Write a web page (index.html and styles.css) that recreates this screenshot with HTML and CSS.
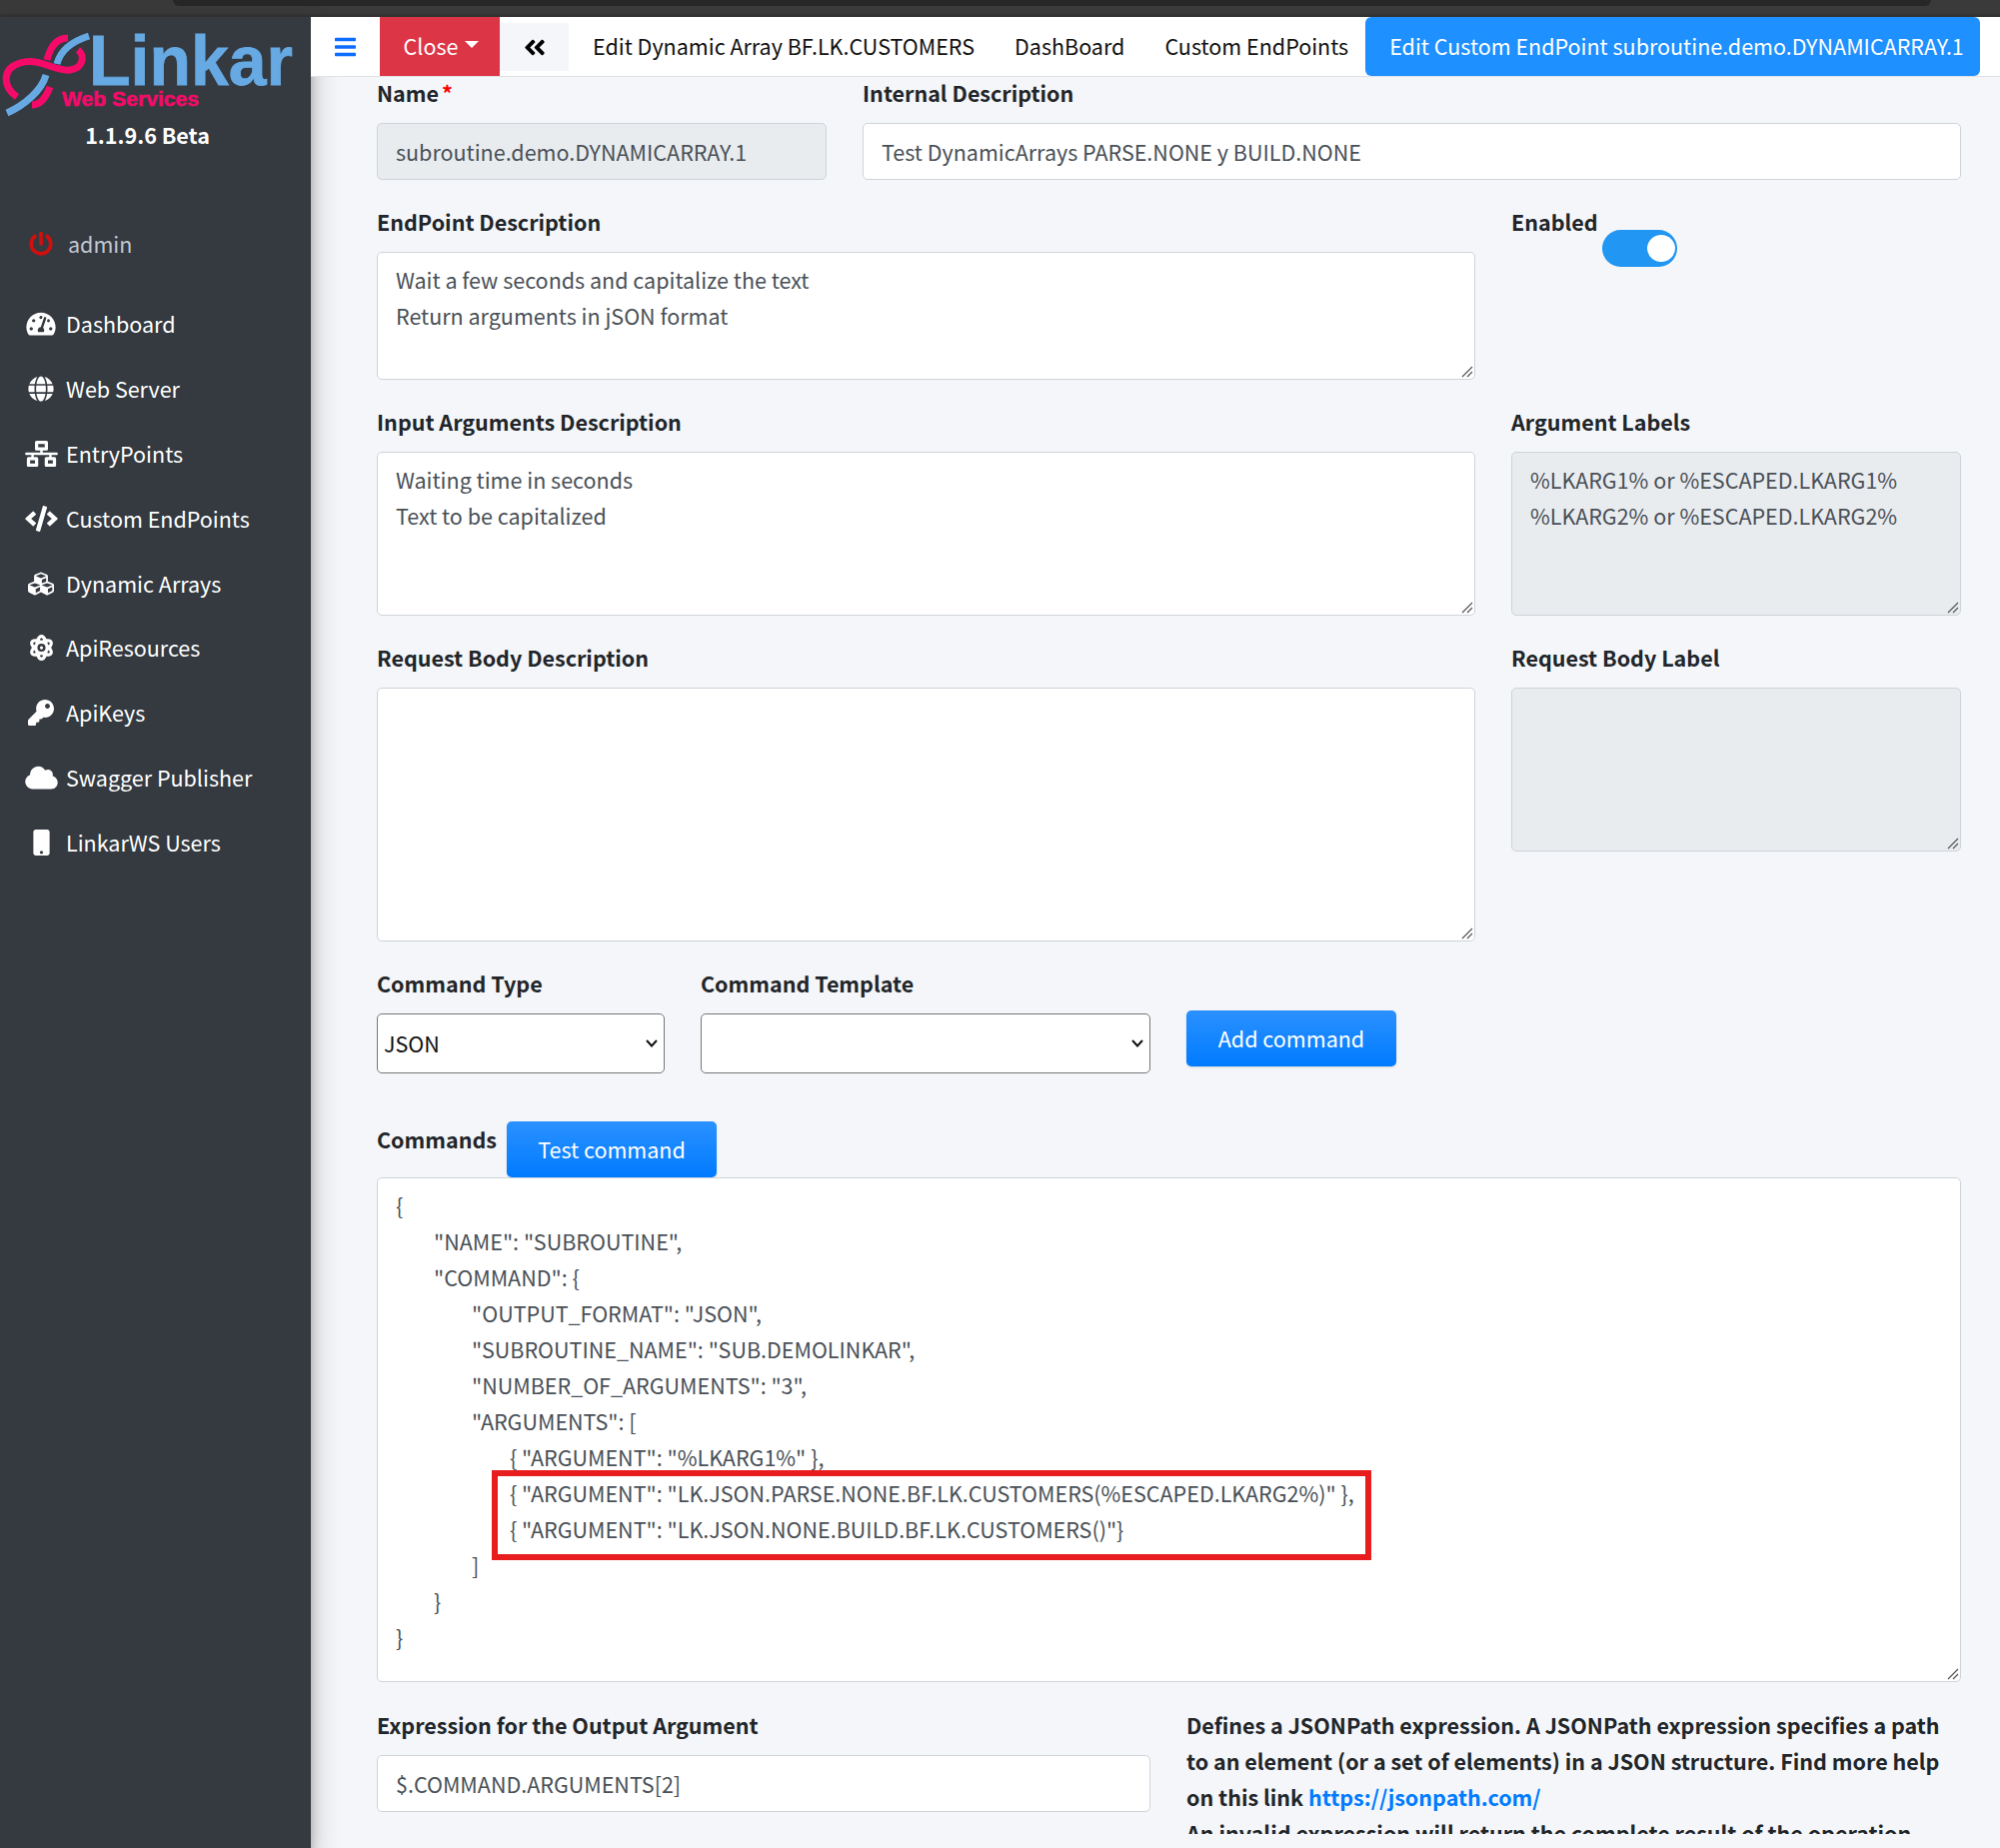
FILE: index.html
```html
<!DOCTYPE html>
<html lang="en">
<head>
<meta charset="utf-8">
<title>Linkar Web Services</title>
<link rel="stylesheet" href="styles.css">
</head>
<body>
<div class="chrome"><div class="chrome-tab"></div></div>
<div class="app">
  <aside class="sidebar">
    <svg class="logo" viewBox="0 0 311 100" width="311" height="100">
      <path class="pink" d="M17 80C3 70 1 52 20 46C40 40 55 55 70 53C84 51 85 38 78 33"/>
      <path class="pink" d="M68 21C56 21 50 31 47 43"/>
      <path class="pink" d="M32 88C42 88 47 78 50 70"/>
      <path class="blue" d="M89 19C70 25 60 35 57 47"/>
      <path class="blue" d="M46 58C42 73 25 88 7 96"/>
      <text class="logo-main" x="89" y="68" textLength="204" lengthAdjust="spacingAndGlyphs">Linkar</text>
      <text class="logo-sub" x="62" y="89" textLength="137" lengthAdjust="spacingAndGlyphs">Web Services</text>
    </svg>
    <div class="version">1.1.9.6 Beta</div>
    <div class="user">
      <span class="ico"><svg class="red" width="24" height="24" viewBox="0 0 512 512"><path d="M400 54.1c63 45 104 118.6 104 201.9 0 136.8-110.8 247.7-247.5 248C120 504.3 8.2 393 8 256.4 7.9 173.1 48.9 99.3 111.8 54.2c11.7-8.3 28-4.8 35 7.7L162.6 90c5.9 10.5 3.1 23.8-6.6 31-41.5 30.8-68 79.6-68 134.9-.1 92.3 74.5 168.1 168 168.1 91.6 0 168.6-74.2 168-169.1-.3-51.8-24.7-101.8-68.1-134-9.7-7.2-12.4-20.5-6.5-30.9l15.8-28.1c7-12.4 23.2-16.1 34.8-7.8zM296 264V24c0-13.3-10.7-24-24-24h-32c-13.3 0-24 10.7-24 24v240c0 13.3 10.7 24 24 24h32c13.3 0 24-10.7 24-24z"/></svg></span>
      <span class="user-name">admin</span>
    </div>
    <nav class="menu">
      <a class="menu-item"><span class="ico"><svg width="30" height="26" viewBox="0 0 576 512"><path d="M288 32C128.94 32 0 160.94 0 320c0 52.8 14.25 102.26 39.06 144.8 5.61 9.62 16.3 15.2 27.44 15.2h443c11.14 0 21.83-5.58 27.44-15.2C561.75 422.26 576 372.8 576 320c0-159.06-128.94-288-288-288zm0 64c14.71 0 26.58 10.13 30.32 23.65-1.11 2.26-2.64 4.23-3.45 6.67l-9.22 27.67c-5.13 3.49-10.97 6.01-17.64 6.01-17.67 0-32-14.33-32-32S270.33 96 288 96zM96 384c-17.67 0-32-14.33-32-32s14.33-32 32-32 32 14.33 32 32-14.33 32-32 32zm48-160c-17.67 0-32-14.33-32-32s14.33-32 32-32 32 14.33 32 32-14.33 32-32 32zm246.77-72.41l-61.33 184C343.13 347.33 352 364.54 352 384c0 11.72-3.38 22.55-8.88 32H232.88c-5.5-9.45-8.88-20.28-8.88-32 0-33.94 26.5-61.43 59.9-63.59l61.34-184.01c4.17-12.56 17.73-19.45 30.36-15.17 12.57 4.19 19.35 17.79 15.17 30.36zm14.66 57.2l15.52-46.55c3.47-1.29 7.13-2.23 11.05-2.23 17.67 0 32 14.33 32 32s-14.33 32-32 32c-11.38-.01-20.89-6.28-26.57-15.22zM480 384c-17.67 0-32-14.33-32-32s14.33-32 32-32 32 14.33 32 32-14.33 32-32 32z"/></svg></span>Dashboard</a>
      <a class="menu-item"><span class="ico"><svg width="26" height="26" viewBox="0 0 496 512"><path d="M336.5 160C322 70.7 287.8 8 248 8s-74 62.7-88.5 152h177zM152 256c0 22.2 1.2 43.5 3.3 64h185.3c2.1-20.5 3.3-41.8 3.3-64s-1.2-43.5-3.3-64H155.3c-2.1 20.5-3.3 41.8-3.3 64zm324.7-96c-28.6-67.9-86.5-120.4-158-141.6 24.4 33.8 41.2 84.7 50 141.6h108zM177.2 18.4C105.8 39.6 47.8 92.1 19.3 160h108c8.7-56.9 25.5-107.8 49.9-141.6zM487.4 192H372.7c2.1 21 3.3 42.5 3.3 64s-1.2 43-3.3 64h114.6c5.5-20.5 8.6-41.8 8.6-64s-3.1-43.5-8.5-64zM120 256c0-21.5 1.2-43 3.3-64H8.6C3.2 212.5 0 233.8 0 256s3.2 43.5 8.6 64h114.6c-2-21-3.2-42.5-3.2-64zm39.5 96c14.5 89.3 48.7 152 88.5 152s74-62.7 88.5-152h-177zm159.3 141.6c71.4-21.2 129.4-73.7 158-141.6h-108c-8.8 56.9-25.6 107.8-50 141.6zM19.3 352c28.6 67.9 86.5 120.4 158 141.6-24.4-33.8-41.2-84.7-50-141.6h-108z"/></svg></span>Web Server</a>
      <a class="menu-item"><span class="ico"><svg width="33" height="26" viewBox="0 0 640 512"><path d="M640 264v-16c0-8.84-7.16-16-16-16H344v-40h72c17.67 0 32-14.33 32-32V32c0-17.67-14.33-32-32-32H224c-17.67 0-32 14.33-32 32v128c0 17.67 14.33 32 32 32h72v40H16c-8.84 0-16 7.16-16 16v16c0 8.84 7.16 16 16 16h104v40H64c-17.67 0-32 14.33-32 32v128c0 17.67 14.33 32 32 32h160c17.67 0 32-14.33 32-32V352c0-17.67-14.33-32-32-32h-56v-40h304v40h-56c-17.67 0-32 14.33-32 32v128c0 17.67 14.33 32 32 32h160c17.67 0 32-14.33 32-32V352c0-17.67-14.33-32-32-32h-56v-40h104c8.84 0 16-7.16 16-16zM256 128V64h128v64H256zm-64 320H96v-64h96v64zm352 0h-96v-64h96v64z"/></svg></span>EntryPoints</a>
      <a class="menu-item"><span class="ico"><svg width="33" height="26" viewBox="0 0 640 512"><path d="M278.9 511.5l-61-17.7c-6.4-1.8-10-8.5-8.2-14.9L346.2 8.7c1.8-6.4 8.5-10 14.9-8.2l61 17.7c6.4 1.8 10 8.5 8.2 14.9L293.8 503.3c-1.9 6.4-8.5 10.1-14.9 8.2zm-114-112.2l43.5-46.4c4.6-4.9 4.3-12.7-.8-17.2L117 256l90.6-79.7c5.1-4.5 5.5-12.3.8-17.2l-43.5-46.4c-4.5-4.8-12.1-5.1-17-.5L3.8 247.2c-5.1 4.7-5.1 12.8 0 17.5l144.1 135.1c4.9 4.6 12.5 4.4 17-.5zm327.2.6l144.1-135.1c5.1-4.7 5.1-12.8 0-17.5L492.1 112.1c-4.8-4.5-12.4-4.3-17 .5L431.6 159c-4.6 4.9-4.3 12.7.8 17.2L523 256l-90.6 79.7c-5.1 4.5-5.5 12.3-.8 17.2l43.5 46.4c4.5 4.9 12.1 5.1 17 .6z"/></svg></span>Custom EndPoints</a>
      <a class="menu-item"><span class="ico"><svg width="26" height="26" viewBox="0 0 512 512"><path d="M488.6 250.2L392 214V105.5c0-15-9.3-28.4-23.4-33.7l-100-37.5c-8.1-3.1-17.1-3.1-25.3 0l-100 37.5c-14.1 5.3-23.4 18.7-23.4 33.7V214l-96.6 36.2C9.3 255.5 0 268.9 0 283.9V394c0 13.6 7.7 26.1 19.9 32.2l100 50c10.1 5.1 22.1 5.1 32.2 0l103.9-52 103.9 52c10.1 5.1 22.1 5.1 32.2 0l100-50c12.2-6.1 19.9-18.6 19.9-32.2V283.9c0-15-9.3-28.4-23.4-33.7zM358 214.8l-85 31.9v-68.2l85-37v73.3zM154 104.1l102-38.2 102 38.2v.6l-102 41.4-102-41.4v-.6zm84 291.1l-85 42.5v-79.1l85-38.8v75.4zm0-112l-102 41.4-102-41.4v-.6l102-38.2 102 38.2v.6zm240 112l-85 42.5v-79.1l85-38.8v75.4zm0-112l-102 41.4-102-41.4v-.6l102-38.2 102 38.2v.6z"/></svg></span>Dynamic Arrays</a>
      <a class="menu-item"><span class="ico"><svg width="23" height="26" viewBox="0 0 448 512"><path d="M223.99908,224a32,32,0,1,0,32.00782,32A32.06431,32.06431,0,0,0,223.99908,224Zm214.172-96c-10.877-19.5-40.50979-50.75-116.27544-41.875C300.39168,34.875,267.63386,0,223.99908,0s-76.39066,34.875-97.89653,86.125C50.3369,77.375,20.706,108.5,9.82907,128-6.54984,157.375-5.17484,201.125,35.702,256-5.17484,310.875-6.54984,354.625,9.82907,384c29.13087,52.375,101.64652,43.625,116.27348,41.875C147.60842,477.125,180.36429,512,223.99908,512s76.3926-34.875,97.89652-86.125c14.62891,1.75,87.14456,10.5,116.27544-41.875C454.55,354.625,453.175,310.875,412.29608,256,453.175,201.125,454.55,157.375,438.171,128ZM63.33313,352c-4-7.25-.125-24.75,15.00195-48.25,6.87695,6.5,14.12891,12.875,21.88087,19.125,1.625,13.75,4,27.125,6.75,40.125C82.34,363.875,67.33313,359.25,63.33313,352Zm36.88282-162.875c-7.75196,6.25-15.00392,12.625-21.88087,19.125-15.12891-23.5-19.00195-41-15.00195-48.25,3.377-6.125,15.97558-11.5,37.92775-11.5,1.75,0,3.875.375,5.75.375C104.09,162.25,101.84,175.625,100.216,189.125ZM223.99908,64c9.50195,0,22.25586,13.5,33.88282,37.25-11.252,3.75-22.50391,8-33.88282,12.875-11.377-4.875-22.62892-9.125-33.88283-12.875C201.74316,77.5,214.49712,64,223.99908,64Zm0,384c-9.502,0-22.25392-13.5-33.88283-37.25,11.25391-3.75,22.50587-8,33.88283-12.875C235.378,402.75,246.62994,407,257.8819,410.75,246.25494,434.5,233.501,448,223.99908,448Zm0-112a80,80,0,1,1,80-80A80.00023,80.00023,0,0,1,223.99908,336ZM384.6593,352c-4,7.25-19.00392,11.875-43.63089,11,2.75-13,5.125-26.375,6.75-40.125,7.75391-6.25,15.00392-12.625,21.87892-19.125C384.7843,327.25,388.6593,344.75,384.6593,352ZM369.65538,208.25c-6.875-6.5-14.125-12.875-21.87892-19.125-1.625-13.5-3.875-26.875-6.75-40.25,1.875,0,4.00195-.375,5.75-.375,21.95413,0,34.67683,4.375,37.88085,11.5C388.6593,167.25,384.7843,184.75,369.65538,208.25Z"/></svg></span>ApiResources</a>
      <a class="menu-item"><span class="ico"><svg width="26" height="26" viewBox="0 0 512 512"><path d="M512 176.001C512 273.203 433.202 352 336 352c-11.22 0-22.19-1.062-32.827-3.069l-24.012 27.014A23.999 23.999 0 0 1 261.223 384H224v40c0 13.255-10.745 24-24 24h-40v40c0 13.255-10.745 24-24 24H24c-13.255 0-24-10.745-24-24v-78.059c0-6.365 2.529-12.47 7.029-16.971l161.802-161.802C163.108 213.814 160 195.271 160 176 160 78.798 238.797.001 335.999 0 433.488-.001 512 78.511 512 176.001zM336 128c0 26.51 21.49 48 48 48s48-21.49 48-48-21.49-48-48-48-48 21.49-48 48z"/></svg></span>ApiKeys</a>
      <a class="menu-item"><span class="ico"><svg width="33" height="26" viewBox="0 0 640 512"><path d="M537.6 226.6c4.1-10.7 6.4-22.4 6.4-34.6 0-53-43-96-96-96-19.7 0-38.1 6-53.3 16.2C367 64.2 315.3 32 256 32c-88.4 0-160 71.6-160 160 0 2.7.1 5.4.2 8.1C40.2 219.8 0 273.2 0 336c0 79.5 64.5 144 144 144h368c70.7 0 128-57.3 128-128 0-61.9-44-113.6-102.4-125.4z"/></svg></span>Swagger Publisher</a>
      <a class="menu-item"><span class="ico"><svg width="17" height="26" viewBox="0 0 320 512"><path d="M272 0H48C21.5 0 0 21.5 0 48v416c0 26.5 21.5 48 48 48h224c26.5 0 48-21.5 48-48V48c0-26.5-21.5-48-48-48zM160 480c-17.7 0-32-14.3-32-32s14.3-32 32-32 32 14.3 32 32-14.3 32-32 32z"/></svg></span>LinkarWS Users</a>
    </nav>
  </aside>
  <div class="main">
    <header class="topbar">
      <a class="burger"><svg width="21" height="24" viewBox="0 0 448 512" preserveAspectRatio="none"><path d="M16 132h416c8.837 0 16-7.163 16-16V76c0-8.837-7.163-16-16-16H16C7.163 60 0 67.163 0 76v40c0 8.837 7.163 16 16 16zm0 160h416c8.837 0 16-7.163 16-16v-40c0-8.837-7.163-16-16-16H16c-8.837 0-16 7.163-16 16v40c0 8.837 7.163 16 16 16zm0 160h416c8.837 0 16-7.163 16-16v-40c0-8.837-7.163-16-16-16H16c-8.837 0-16 7.163-16 16v40c0 8.837 7.163 16 16 16z"/></svg></a>
      <a class="close-btn">Close<span class="caret"></span></a>
      <a class="back-btn"><svg width="22" height="25" viewBox="0 0 448 512"><path d="M223.7 239l136-136c9.4-9.4 24.6-9.4 33.9 0l22.6 22.6c9.4 9.4 9.4 24.6 0 33.9L319.9 256l96.4 96.4c9.4 9.4 9.4 24.6 0 33.9L393.7 409c-9.4 9.4-24.6 9.4-33.9 0l-136-136c-9.5-9.4-9.5-24.6-.1-34zm-192 34l136 136c9.4 9.4 24.6 9.4 33.9 0l22.6-22.6c9.4-9.4 9.4-24.6 0-33.9L127.9 256l96.4-96.4c9.4-9.4 9.4-24.6 0-33.9L201.7 103c-9.4-9.4-24.6-9.4-33.9 0l-136 136c-9.5 9.4-9.5 24.6-.1 34z"/></svg></a>
      <a class="tab tab-first">Edit Dynamic Array BF.LK.CUSTOMERS</a>
      <a class="tab">DashBoard</a>
      <a class="tab">Custom EndPoints</a>
      <a class="tab tab-active">Edit Custom EndPoint subroutine.demo.DYNAMICARRAY.1</a>
    </header>
    <main class="content">
      <div class="row row-30-70 row-first">
        <div class="field"><label class="lbl">Name<span class="req">*</span></label><input class="ctl ctl-off" readonly value="subroutine.demo.DYNAMICARRAY.1"></div>
        <div class="field"><label class="lbl">Internal Description</label><input class="ctl" readonly value="Test DynamicArrays PARSE.NONE y BUILD.NONE"></div>
      </div>
      <div class="row row-70-30">
        <div class="field"><label class="lbl">EndPoint Description</label><textarea class="ctl area h128" readonly>Wait a few seconds and capitalize the text
Return arguments in jSON format</textarea></div>
        <div class="enabled"><label class="lbl">Enabled</label><span class="toggle"><span class="knob"></span></span></div>
      </div>
      <div class="row row-70-30">
        <div class="field"><label class="lbl">Input Arguments Description</label><textarea class="ctl area h164" readonly>Waiting time in seconds
Text to be capitalized</textarea></div>
        <div class="field"><label class="lbl">Argument Labels</label><textarea class="ctl ctl-off area h164" readonly>%LKARG1% or %ESCAPED.LKARG1%
%LKARG2% or %ESCAPED.LKARG2%</textarea></div>
      </div>
      <div class="row row-70-30">
        <div class="field"><label class="lbl">Request Body Description</label><textarea class="ctl area h254" readonly></textarea></div>
        <div class="field"><label class="lbl">Request Body Label</label><textarea class="ctl ctl-off area h164" readonly></textarea></div>
      </div>
      <div class="row row-cmd">
        <div class="field"><label class="lbl">Command Type</label><select class="sel"><option>JSON</option></select></div>
        <div class="field"><label class="lbl">Command Template</label><select class="sel"><option></option></select></div>
        <div class="add-wrap"><button class="btn">Add command</button></div>
      </div>
      <div class="cmd-head"><label class="lbl">Commands</label><button class="btn">Test command</button></div>
      <div class="cmd-body">
<textarea class="ctl area h505" readonly>{
	"NAME": "SUBROUTINE",
	"COMMAND": {
		"OUTPUT_FORMAT": "JSON",
		"SUBROUTINE_NAME": "SUB.DEMOLINKAR",
		"NUMBER_OF_ARGUMENTS": "3",
		"ARGUMENTS": [
			{ "ARGUMENT": "%LKARG1%" },
			{ "ARGUMENT": "LK.JSON.PARSE.NONE.BF.LK.CUSTOMERS(%ESCAPED.LKARG2%)" },
			{ "ARGUMENT": "LK.JSON.NONE.BUILD.BF.LK.CUSTOMERS()"}
		]
	}
}</textarea>
        <div class="mark"></div>
      </div>
      <div class="row row-half">
        <div class="field"><label class="lbl">Expression for the Output Argument</label><input class="ctl" readonly value="$.COMMAND.ARGUMENTS[2]"></div>
        <div class="help">Defines a JSONPath expression. A JSONPath expression specifies a path to an element (or a set of elements) in a JSON structure. Find more help on this link <a class="link">https://jsonpath.com/</a><br>An invalid expression will return the complete result of the operation</div>
      </div>
    </main>
  </div>
</div>
</body>
</html>
```
FILE: styles.css
```css
* { box-sizing: border-box; }
html, body { margin: 0; height: 1849px; overflow: hidden; }
body {
  background: #f4f6f9;
  color: #212529;
  font-family: "Noto Sans CJK SC", "Noto Sans", sans-serif;
  font-size: 21.5px;
  line-height: 36px;
}
.chrome { height: 17px; background: #3a3a3a; border-bottom: 3px solid #333; }
.chrome-tab { margin-left: 173px; width: 1759px; height: 6px; background: #272727; border-radius: 0 0 10px 10px; }
.app { display: flex; height: 1832px; }

.sidebar {
  width: 311px; flex: none; background: #343a40; color: #fff;
  position: relative; z-index: 2;
  box-shadow: 0 14px 28px rgba(0,0,0,.25), 0 10px 10px rgba(0,0,0,.22);
}
.logo { display: block; }
.pink { fill: none; stroke: #f50a6a; stroke-width: 7; }
.blue { fill: none; stroke: #66a9e3; stroke-width: 7; }
.logo-main { font-family: "Liberation Sans", sans-serif; font-weight: 700; font-size: 71px; fill: #66a9e3; stroke: #66a9e3; stroke-width: .8px; }
.logo-sub { font-family: "Liberation Sans", sans-serif; font-weight: 700; font-size: 20px; fill: #f50a6a; stroke: #f50a6a; stroke-width: .5px; }
.version { text-align: center; font-weight: 700; padding-right: 16px; }
.user { display: flex; align-items: center; margin-top: 73px; height: 36px; }
.user-name { color: #c2c7d0; margin-left: 2px; }
.menu { margin-top: 30px; }
.menu-item { display: flex; align-items: center; height: 64.8px; color: #fff; }
.ico { display: flex; justify-content: center; align-items: center; width: 49px; padding-right: 1px; margin-left: 17px; flex: none; }
.ico svg { fill: #fff; }
.ico svg.red { fill: #d00f0f; }

.main { flex: 1; min-width: 0; display: flex; flex-direction: column; }
.topbar {
  position: relative; z-index: 3;
  height: 60px; flex: none; background: #fff; border-bottom: 1px solid #dee2e6;
  display: flex; align-items: stretch;
}
.burger { width: 69px; flex: none; display: flex; align-items: center; justify-content: center; }
.burger svg { fill: #0d6efd; }
.close-btn { width: 120px; flex: none; background: #dc3545; color: #fff; display: flex; align-items: center; justify-content: center; padding: 0 0 1px 3px; }
.caret { margin-left: 7px; border-top: 7px solid #fff; border-left: 7px solid transparent; border-right: 7px solid transparent; margin-top: -4px; }
.back-btn { width: 69px; flex: none; height: 48px; margin-top: 6px; background: #f4f6f9; display: flex; align-items: center; justify-content: center; }
.back-btn svg { fill: #000; }
.tab { display: flex; flex: none; align-items: center; padding: 0 20px 1px; color: #111; white-space: nowrap; }
.tab-first { margin-left: 4px; }
.tab-active { background: #1e90ff; color: #fff; border-radius: 6px; padding: 0 16px 1px 24px; margin-left: -3px; }

.content { height: 1758px; overflow: hidden; padding: 0 39px 0 66px; }
.row { display: grid; column-gap: 36px; margin-top: 24px; }
.row-first { margin-top: -2px; }
.row-30-70 { grid-template-columns: 450px 1fr; }
.row-70-30 { grid-template-columns: 1fr 450px; }
.row-cmd { grid-template-columns: 288px 450px 210px; }
.row-half { grid-template-columns: 774px 1fr; margin-top: 25px; }
.lbl { display: block; font-weight: 700; }
.req { color: #f00; margin-left: 3px; }
.field .lbl { margin-bottom: 12px; }
.ctl {
  display: block; width: 100%; height: 57px; padding: 0 18px;
  font: inherit; color: #495057; background-color: #fff;
  border: 1px solid #ced4da; border-radius: 5px; outline: 0;
}
.ctl-off { background-color: #e9ecef; }
.area {
  padding: 9px 18px; line-height: 36px; overflow: hidden; tab-size: 38px; resize: none; white-space: pre-wrap;
  background-image: url("data:image/svg+xml,%3Csvg xmlns='http://www.w3.org/2000/svg' width='12' height='12'%3E%3Cpath d='M1 11L11 1M6 11L11 6' stroke='%23555' stroke-width='1.2' fill='none'/%3E%3C/svg%3E");
  background-repeat: no-repeat;
  background-position: right 1px bottom 1px;
}
.h128 { height: 128px; }
.h164 { height: 164px; }
.h254 { height: 254px; }
.h505 { height: 505px; }
.enabled { display: flex; align-items: flex-start; }
.toggle { width: 75px; height: 37px; margin: 26px 0 0 4px; background: #2196f3; border-radius: 19px; display: flex; justify-content: flex-end; align-items: center; padding-right: 2px; }
.knob { width: 28px; height: 27px; background: #fff; border-radius: 50%; }
.sel {
  display: block; width: 100%; height: 60px; padding: 0 6px;
  font: inherit; color: #111; background-color: #fff;
  border: 1px solid #767676; border-radius: 5px;
  appearance: none;
  background-image: url("data:image/svg+xml,%3Csvg xmlns='http://www.w3.org/2000/svg' width='14' height='10'%3E%3Cpath d='M2 2L7 7.5L12 2' stroke='%23111' stroke-width='2' fill='none'/%3E%3C/svg%3E");
  background-repeat: no-repeat;
  background-position: right 5px center;
}
.btn {
  font: inherit; color: #fff; height: 56px; width: 210px; padding: 0;
  border: 0; border-radius: 5px;
  background: linear-gradient(#2b91ff, #007bff);
  box-shadow: 0 1px 2px rgba(0,0,0,.15);
}
.add-wrap { padding-top: 45px; }
.cmd-head { display: flex; align-items: flex-start; margin-top: 48px; column-gap: 10px; }
.cmd-body { position: relative; }
.mark { position: absolute; left: 115px; top: 293px; width: 880px; height: 90px; border: 6px solid #e81e1e; pointer-events: none; }
.help { font-weight: 700; }
.link { color: #007bff; }
```
